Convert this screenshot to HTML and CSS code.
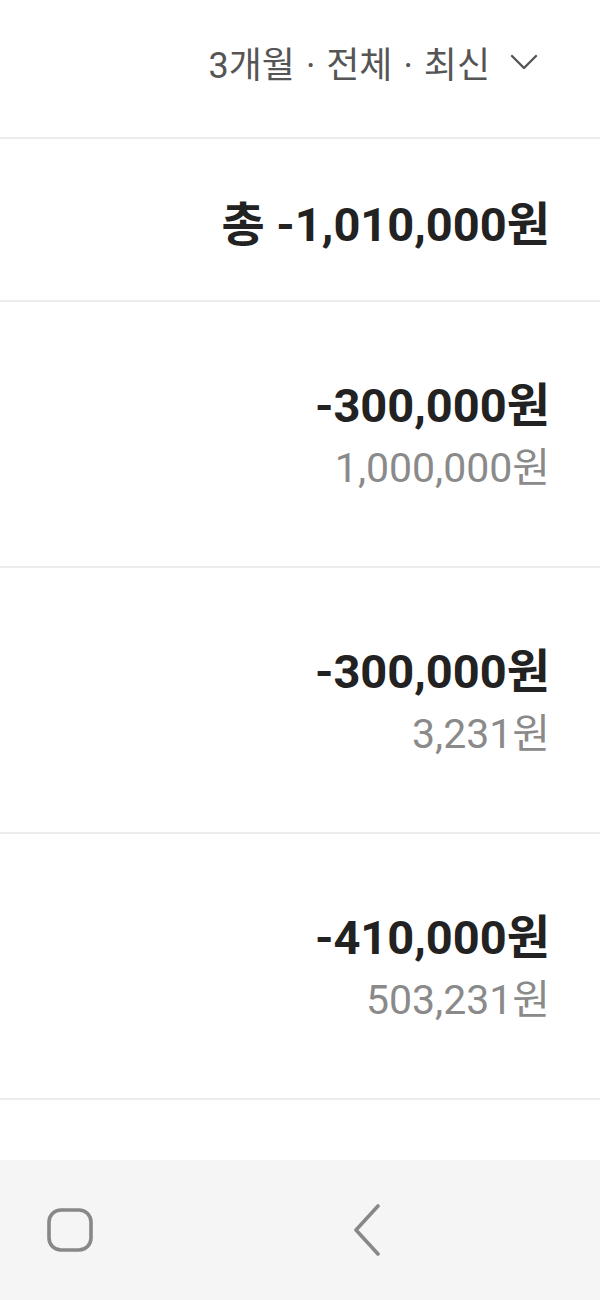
FILE: index.html
```html
<!doctype html>
<html lang="ko">
	<head>
		<meta charset="utf-8">
		<link rel="stylesheet" href="styles.css">
	</head>
	<body>
		<div id="screen">
			<div id="content">
				<div class="filter-bar">
					<span class="filter-text">3개월 · 전체 · 최신</span>
					<svg class="filter-arrow" width="28" height="16" viewBox="0 0 28 16">
						<path d="M2 2 L14 14 L26 2" fill="none" stroke="#555" stroke-width="2.4" stroke-linecap="round" stroke-linejoin="round"/>
					</svg>
				</div>
				<div class="total">총 -1,010,000원</div>
				<ul class="item-list">
					<li>
						<div class="amount">-300,000원</div>
						<div class="balance">1,000,000원</div>
					</li>
					<li>
						<div class="amount">-300,000원</div>
						<div class="balance">3,231원</div>
					</li>
					<li>
						<div class="amount">-410,000원</div>
						<div class="balance">503,231원</div>
					</li>
					<li></li>
				</ul>
			</div>
			<div id="nav-bar">
				<svg class="nav-home" width="46" height="44" viewBox="0 0 46 44">
					<rect x="2" y="2" width="42" height="40" rx="12" fill="none" stroke="#888" stroke-width="3.6"/>
				</svg>
				<svg class="nav-back" width="28" height="52" viewBox="0 0 28 52">
					<path d="M25 2 L3 26 L25 50" fill="none" stroke="#888" stroke-width="3.6" stroke-linecap="round" stroke-linejoin="round"/>
				</svg>
			</div>
		</div>
	</body>
</html>
```

FILE: styles.css
```css
* {
	margin: 0px;
	padding: 0px;
}
body {
	background: white;
	font-family: "Roboto", "Noto Sans CJK KR", sans-serif;
}
ul {
	list-style-type: none;
}
#screen {
	display: flex;
	flex-direction: column;
	width: 600px;
	height: 1300px;
}
#content {
	flex: 1;
	overflow: hidden;
}
.filter-bar {
	display: flex;
	justify-content: flex-end;
	align-items: center;
	height: 139px;
	padding-right: 62px;
	padding-bottom: 14px;
	box-sizing: border-box;
	border-bottom: 2px solid #ececec;
	color: #555;
}
.filter-text {
	font-size: 36px;
	word-spacing: 2px;
}
.filter-arrow {
	margin-left: 20px;
}
.total {
	display: flex;
	justify-content: flex-end;
	align-items: center;
	height: 163px;
	padding-right: 50px;
	padding-top: 2px;
	box-sizing: border-box;
	border-bottom: 2px solid #ececec;
	font-size: 47px;
	font-weight: bold;
	color: #222;
}
.item-list li {
	display: flex;
	flex-direction: column;
	justify-content: center;
	align-items: flex-end;
	height: 258px;
	padding-right: 50px;
	padding-top: 6px;
	border-bottom: 2px solid #ececec;
}
.amount {
	font-size: 47px;
	font-weight: bold;
	line-height: 62px;
	color: #222;
}
.balance {
	font-size: 41px;
	line-height: 62px;
	color: #8a8a8a;
}
#nav-bar {
	display: flex;
	align-items: center;
	height: 140px;
	padding-left: 47px;
	background: #f5f5f5;
}
.nav-back {
	margin-left: 260px;
}
```
